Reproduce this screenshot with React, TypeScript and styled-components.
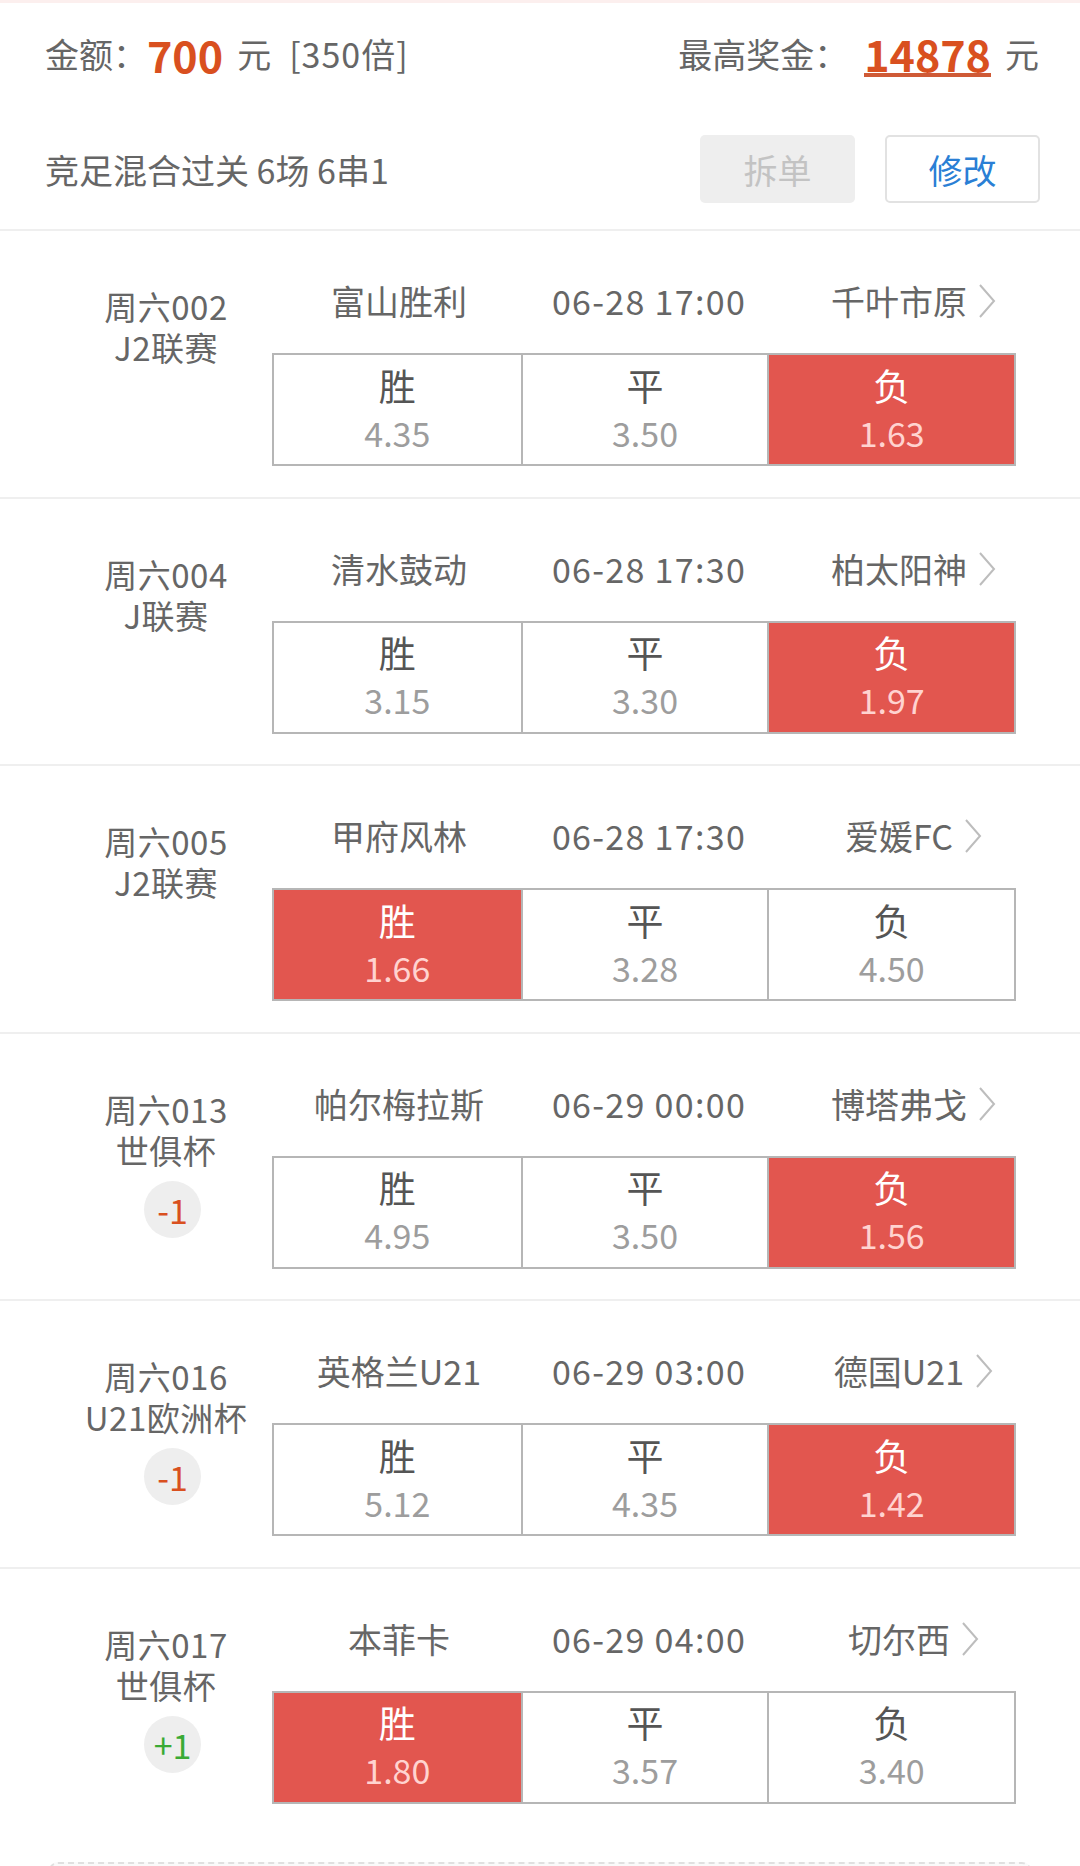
import styled, { createGlobalStyle } from "styled-components";

type Match = {
  id: string;
  league: string;
  home: string;
  time: string;
  away: string;
  odds: string[];
  picked: number;
  handicap?: string;
};

const matches: Match[] = [
  { id: "周六002", league: "J2联赛", home: "富山胜利", time: "06-28 17:00", away: "千叶市原", odds: ["4.35", "3.50", "1.63"], picked: 2 },
  { id: "周六004", league: "J联赛", home: "清水鼓动", time: "06-28 17:30", away: "柏太阳神", odds: ["3.15", "3.30", "1.97"], picked: 2 },
  { id: "周六005", league: "J2联赛", home: "甲府风林", time: "06-28 17:30", away: "爱媛FC", odds: ["1.66", "3.28", "4.50"], picked: 0 },
  { id: "周六013", league: "世俱杯", home: "帕尔梅拉斯", time: "06-29 00:00", away: "博塔弗戈", odds: ["4.95", "3.50", "1.56"], picked: 2, handicap: "-1" },
  { id: "周六016", league: "U21欧洲杯", home: "英格兰U21", time: "06-29 03:00", away: "德国U21", odds: ["5.12", "4.35", "1.42"], picked: 2, handicap: "-1" },
  { id: "周六017", league: "世俱杯", home: "本菲卡", time: "06-29 04:00", away: "切尔西", odds: ["1.80", "3.57", "3.40"], picked: 0, handicap: "+1" },
];

const labels = ["胜", "平", "负"];

export default function App() {
  return (
    <>
      <GlobalStyle />
      <Page>
        <TopStrip />
        <SummaryRow>
          <div>
            <Muted>金额：</Muted>
            <Amount>700</Amount>
            <Unit>元</Unit>
            <Multiple>[350倍]</Multiple>
          </div>
          <div>
            <Muted>最高奖金：</Muted>
            <Prize>14878</Prize>
            <Unit>元</Unit>
          </div>
        </SummaryRow>
        <PlanRow>
          <Muted>竞足混合过关 6场 6串1</Muted>
          <Buttons>
            <SplitButton>拆单</SplitButton>
            <EditButton>修改</EditButton>
          </Buttons>
        </PlanRow>
        <Divider />
        {matches.map((m, i) => (
          <div key={m.id}>
            <MatchBlock>
              <LeftCol>
                <Line>{m.id}</Line>
                <Line>{m.league}</Line>
                {m.handicap && (
                  <Handicap positive={m.handicap.startsWith("+")}>
                    {m.handicap}
                  </Handicap>
                )}
              </LeftCol>
              <RightCol>
                <TeamRow>
                  <span>{m.home}</span>
                  <Time>{m.time}</Time>
                  <Away>
                    {m.away}
                    <Chevron viewBox="0 0 20 36">
                      <path d="M3 2 L17 18 L3 34" />
                    </Chevron>
                  </Away>
                </TeamRow>
                <OddsBox>
                  {m.odds.map((o, k) => (
                    <OddsCell key={k} picked={k === m.picked}>
                      <OddsLabel>{labels[k]}</OddsLabel>
                      <OddsValue>{o}</OddsValue>
                    </OddsCell>
                  ))}
                </OddsBox>
              </RightCol>
            </MatchBlock>
            {i < matches.length - 1 && <Divider />}
          </div>
        ))}
        <NextCard />
      </Page>
    </>
  );
}

const GlobalStyle = createGlobalStyle`
  html, body {
    margin: 0;
    padding: 0;
    background: #fff;
    overflow: hidden;
  }
  body {
    font-family: "Noto Sans CJK SC", "Noto Sans", sans-serif;
    color: #666;
  }
`;

const Page = styled.div`
  width: 1080px;
  background: #fff;
`;

const TopStrip = styled.div`
  height: 3px;
  background: #fcefee;
`;

const SummaryRow = styled.div`
  height: 106px;
  box-sizing: border-box;
  padding: 0 41px 5px 45px;
  display: flex;
  align-items: center;
  justify-content: space-between;
  font-size: 34px;
  div {
    display: flex;
    align-items: center;
  }
`;

const Muted = styled.span`
  font-size: 34px;
  color: #666;
`;

const Amount = styled.span`
  font-size: 43px;
  font-weight: 700;
  color: #d9501f;
`;

const Prize = styled.span`
  font-size: 43px;
  font-weight: 700;
  color: #d9501f;
  margin-left: 16px;
  border-bottom: 4px solid #cf5a36;
  line-height: 40px;
  padding-top: 2px;
`;

const Unit = styled.span`
  font-size: 34px;
  color: #666;
  margin-left: 14px;
`;

const Multiple = styled.span`
  font-size: 34px;
  color: #666;
  margin-left: 18px;
  letter-spacing: 1px;
`;

const PlanRow = styled.div`
  height: 120px;
  padding: 0 40px 0 45px;
  display: flex;
  align-items: center;
  justify-content: space-between;
`;

const Buttons = styled.div`
  display: flex;
  gap: 30px;
`;

const BaseButton = styled.div`
  width: 155px;
  height: 68px;
  box-sizing: border-box;
  border-radius: 5px;
  display: flex;
  align-items: center;
  justify-content: center;
  font-size: 34px;
`;

const SplitButton = styled(BaseButton)`
  background: #eeeeee;
  color: #c3c3c3;
`;

const EditButton = styled(BaseButton)`
  border: 2px solid #e2e2e2;
  color: #2a7fd5;
`;

const Divider = styled.div`
  height: 2px;
  background: #efefef;
`;

const MatchBlock = styled.div`
  height: 265.5px;
  display: grid;
  grid-template-columns: 272px minmax(0, 1fr);
`;

const LeftCol = styled.div`
  padding: 55px 0 0 60px;
  display: flex;
  flex-direction: column;
  align-items: center;
  font-size: 33px;
  letter-spacing: 0.5px;
  color: #666;
`;

const Line = styled.div`
  line-height: 41px;
  white-space: nowrap;
`;

const Handicap = styled.div<{ positive: boolean }>`
  margin: 10px 0 0 13px;
  width: 57px;
  height: 57px;
  border-radius: 50%;
  background: #eeeeee;
  display: flex;
  align-items: center;
  justify-content: center;
  font-size: 34px;
  letter-spacing: 0;
  color: ${(p) => (p.positive ? "#3aaa35" : "#d9501f")};
`;

const RightCol = styled.div`
  padding: 48px 64px 0 0;
`;

const TeamRow = styled.div`
  margin-left: 2px;
  width: 750px;
  height: 44px;
  display: grid;
  grid-template-columns: repeat(3, 250px);
  align-items: center;
  justify-items: center;
  font-size: 34px;
  line-height: 44px;
  color: #666;
  white-space: nowrap;
`;

const Time = styled.span`
  letter-spacing: 1.3px;
`;

const Away = styled.span`
  display: inline-flex;
  align-items: center;
`;

const Chevron = styled.svg`
  width: 20px;
  height: 36px;
  margin-left: 10px;
  margin-right: -30px;
  path {
    fill: none;
    stroke: #bdbdbd;
    stroke-width: 2;
  }
`;

const OddsBox = styled.div`
  margin-top: 30px;
  height: 113px;
  box-sizing: border-box;
  border: 2px solid #b6b6b6;
  display: grid;
  grid-template-columns: repeat(3, 1fr);
`;

const OddsCell = styled.div<{ picked: boolean }>`
  display: flex;
  flex-direction: column;
  align-items: center;
  padding-top: 9.5px;
  background: ${(p) => (p.picked ? "#e2564f" : "#fff")};
  & + & {
    border-left: 2px solid #b6b6b6;
  }
  span:first-child {
    color: ${(p) => (p.picked ? "#fff" : "#555")};
  }
  span:last-child {
    color: ${(p) => (p.picked ? "#ffd3d0" : "#9d9d9d")};
  }
`;

const OddsLabel = styled.span`
  font-size: 37px;
  line-height: 40px;
  margin-bottom: 8px;
`;

const OddsValue = styled.span`
  font-size: 34px;
  line-height: 40px;
`;

const NextCard = styled.div`
  margin: 28px 48px 0;
  height: 80px;
  border: 2px dashed #e0e0e0;
  border-radius: 10px;
  background: #fafafa;
`;
